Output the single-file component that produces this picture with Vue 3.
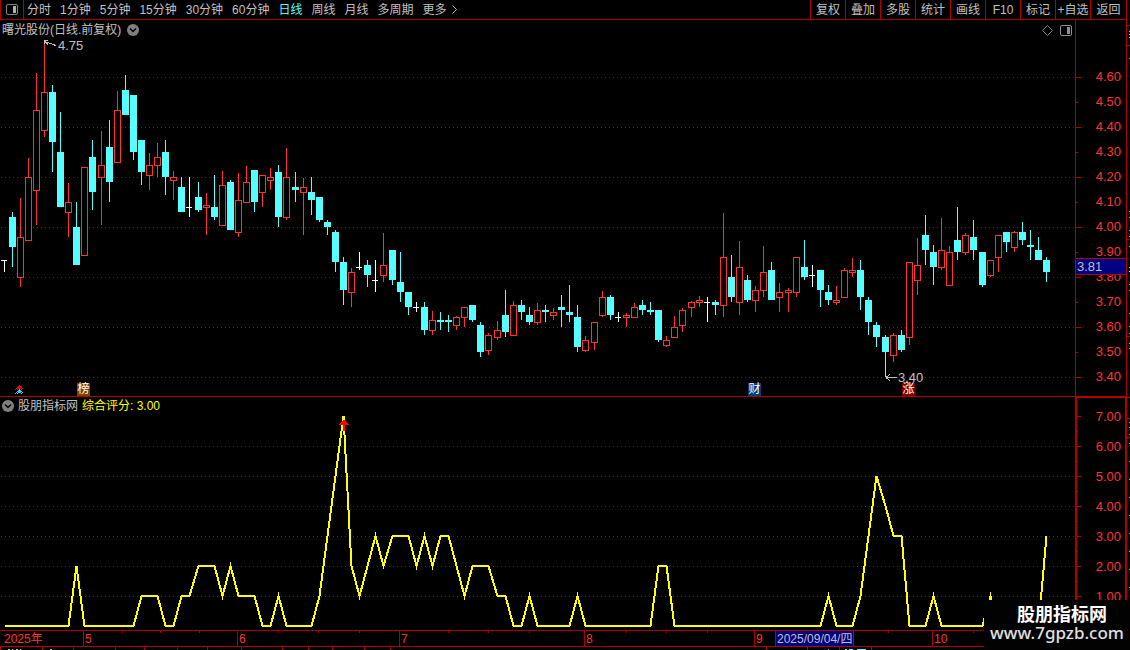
<script setup>
const periods = ['分时', '1分钟', '5分钟', '15分钟', '30分钟', '60分钟', '日线', '周线', '月线', '多周期']
const tools = ['复权', '叠加', '多股', '统计', '画线', 'F10', '标记', '+自选', '返回']
const priceLabels = Array.from({ length: 13 }, (_, i) => (4.6 - i * 0.1).toFixed(2))
const scoreLabels = Array.from({ length: 7 }, (_, i) => (7 - i).toFixed(2))
const months = [
  { name: '2025年', span: 83 },
  { name: '5', span: 154 },
  { name: '6', span: 162 },
  { name: '7', span: 185 },
  { name: '8', span: 170 },
  { name: '9', span: 178 },
  { name: '10', span: 194 }
]
const monthColumns = months.map((m) => m.span + 'fr').join(' ')
const weekTicks = [122, 160, 199, 278, 318, 359, 448, 488, 529, 626, 666, 707, 796, 836, 888, 973]
const footerCells = [0, 42, 73, 115, 144, 177, 207, 241, 282, 308, 332, 364, 390, 766, 807, 839, 871]
const edgeRules = [25, 45, 239, 336, 397, 418, 437]
const edgeMarks = [31, 34, 37, 58, 211, 217, 230, 236, 246, 267, 271, 284, 290, 313, 326, 333, 343, 348, 422, 427, 434, 443, 461, 479, 497, 515, 533, 551, 569, 587]

// kind (u up, d down, w doji), high, body top, body bottom, low
const series = `w 260 260 261 272;d 212 217 247 267;u 198 237 278 287;u 158 177 241 241;u 73 110 191 225;u 43 92 131 137;d 85 92 142 172;d 112 152 207 207;u 183 202 213 237;d 202 227 265 265
u 167 167 256 256;d 140 157 192 210;u 131 165 178 225;d 120 147 182 202;u 91 110 163 163;d 75 90 115 115;d 95 95 152 160;d 140 140 172 185;u 153 165 176 190;u 143 157 166 177
d 140 152 177 195;u 171 177 181 200;d 177 187 212 212;w 177 207 208 217;d 182 197 210 212;u 193 205 208 235;d 175 207 217 220;u 171 185 226 226;d 180 182 230 230;u 173 200 233 237
u 166 182 203 203;d 170 170 202 212;u 175 175 193 207;u 168 177 181 190;d 165 172 217 227;u 148 177 218 220;d 172 187 190 202;u 178 187 193 235;d 177 192 200 215;d 197 197 220 222
d 220 222 227 235;d 230 232 262 272;d 257 262 290 305;u 268 272 293 307;w 252 267 268 270;d 260 265 275 287;w 260 280 281 292;u 233 265 276 282;d 250 250 280 285;d 252 282 292 302
d 292 292 307 315;w 302 307 308 312;d 302 307 330 335;u 311 320 331 335;d 312 320 322 330;d 315 320 322 332;u 316 317 326 330;u 307 307 318 327;d 305 305 320 322;d 322 325 352 357
u 333 335 351 355;u 321 330 338 340;d 290 315 332 337;u 301 305 336 336;d 300 305 312 320;d 307 315 322 325;u 303 310 323 325;d 305 310 312 322;u 308 312 316 320;d 295 307 310 327
d 285 312 315 322;d 305 317 347 352;u 336 340 351 352;u 322 322 343 350;u 291 297 316 317;d 295 297 315 320;w 312 317 318 322;u 313 315 318 327;u 303 307 318 318;d 300 305 310 315
d 302 310 312 315;d 310 310 340 342;u 336 340 346 347;u 316 327 338 338;u 308 310 326 332;u 301 302 308 317;u 296 300 303 307;w 297 302 303 322;d 300 302 305 315;u 213 257 306 317
d 255 277 297 302;u 241 267 303 315;d 275 280 300 302;u 286 290 301 312;u 246 272 291 297;d 262 270 300 300;u 283 292 298 312;u 288 290 293 312;u 257 257 293 297;d 240 267 277 280
w 265 275 276 287;d 270 270 290 307;d 285 292 300 305;u 286 300 303 305;u 268 270 298 298;u 258 270 273 277;d 260 270 297 310;d 297 300 322 335;d 322 325 337 347;d 335 337 352 377
u 333 335 356 362;d 330 335 350 352;u 262 262 338 345;u 238 265 281 295;d 215 235 250 265;d 245 252 267 285;u 218 250 268 270;u 246 252 286 286;d 207 240 252 260;u 233 235 253 255
d 220 237 250 260;d 252 252 285 287;u 260 260 276 277;u 235 235 258 272;d 232 232 242 252;u 231 232 248 252;d 222 232 240 245;d 230 245 247 260;d 237 250 260 260;d 257 260 272 282`
const barX = (i) => Math.floor(4.045 + i * 8.0825)
const candles = series.split(/[;\n]/).map((row, i) => {
  const [kind, ...v] = row.trim().split(' ')
  const [high, top, bottom, low] = v.map(Number)
  return { kind, x: barX(i), high, top, bottom, low }
})

const knots = [
  [0, 0], [8, 0], [9, 2], [10, 0], [16, 0], [17, 1], [19, 1], [20, 0], [21, 0], [22, 1], [23, 1], [24, 2], [26, 2],
  [27, 1], [28, 2], [29, 1], [31, 1], [32, 0], [33, 0], [34, 1], [35, 0], [38, 0], [39, 1], [42, 7], [43, 2], [44, 1],
  [46, 3], [47, 2], [48, 3], [50, 3], [51, 2], [52, 3], [53, 2], [54, 3], [55, 3], [57, 1], [58, 2], [60, 2], [61, 1],
  [62, 1], [63, 0], [64, 0], [65, 1], [66, 0], [70, 0], [71, 1], [72, 0], [80, 0], [81, 2], [82, 2], [83, 0], [101, 0],
  [102, 1], [103, 0], [105, 0], [106, 1], [108, 5], [109, 4], [110, 3], [111, 3], [112, 0], [114, 0], [115, 1],
  [116, 0], [121, 0], [122, 1], [123, 0], [128, 0], [129, 3]
]
const scoreLine = knots.map(([i, v]) => `${barX(i) + 0.5},${229 - v * 30}`).join(' ')
const pct = (n, total) => (n / total) * 100 + '%'
</script>

<template>
  <div class="terminal">
    <main class="screen">
      <header class="toolbar">
        <button class="pane-toggle" aria-label="侧栏">
          <svg width="12" height="11" viewBox="0 0 12 11"><rect x=".5" y=".5" width="11" height="10" rx="1.5" fill="none" stroke="#808080" /><rect x="7" y="2" width="3" height="7" fill="#b0b0b0" /></svg>
        </button>
        <nav class="periods">
          <button v-for="p in periods" :key="p" :class="{ active: p === '日线' }">{{ p }}</button>
          <button class="more">更多<svg width="6" height="9" viewBox="0 0 6 9"><path d="M.5 .5L4.5 4.5L.5 8.5" fill="none" stroke="#c0c0c0" /></svg></button>
        </nav>
        <div class="tools"><button v-for="t in tools" :key="t">{{ t }}</button></div>
      </header>

      <section class="panel price">
        <div class="plot">
          <svg class="canvas" viewBox="0 20 1075 376" preserveAspectRatio="none" shape-rendering="crispEdges">
            <line v-for="n in 7" :key="n" x1="1" x2="1075" :y1="27.5 + n * 50" :y2="27.5 + n * 50" class="grid" />
            <g v-for="c in candles" :key="c.x" :class="c.kind">
              <template v-if="c.kind === 'u'">
                <rect :x="c.x" :y="c.high" width="1" :height="c.top - c.high" />
                <rect :x="c.x" :y="c.bottom" width="1" :height="c.low - c.bottom" />
                <rect class="hollow" :x="c.x - 2.5" :y="c.top + 0.5" width="6" :height="c.bottom - c.top - 1" />
              </template>
              <template v-else>
                <rect :x="c.x" :y="c.high" width="1" :height="c.low - c.high" />
                <rect :x="c.x - 3" :y="c.top" :width="c.kind === 'w' ? 6 : 7" :height="c.bottom - c.top" />
              </template>
            </g>
            <path d="M44.5 44V40.5H48M44.5 41.5L56 45.5M45 41.5L48 44.5" class="pointer" />
            <path d="M886 377.5H897M886 377.5L890 374.5M886 377.5L890 380.5" class="pointer" />
            <path d="M15.5 389.5L19.5 386L23.5 389.5M17 390L19.5 388L22 390" fill="none" stroke="#f00" />
            <path d="M15.5 393.5L19.5 390L23.5 393.5M17 394L19.5 392L22 394" fill="none" stroke="#3cf" />
          </svg>
          <div class="title">
            <span>曙光股份(日线.前复权)</span>
            <button class="round" aria-label="展开"><svg width="12" height="12" viewBox="0 0 12 12"><circle cx="6" cy="6" r="6" fill="#808080" /><path d="M3 4.5L6 7.5L9 4.5" fill="none" stroke="#000" stroke-width="1.5" /></svg></button>
            <span class="corner">
              <svg width="11" height="11" viewBox="0 0 11 11"><path d="M5.5 .5L10.5 5.5L5.5 10.5L.5 5.5Z" fill="none" stroke="#808080" /></svg>
              <svg width="12" height="11" viewBox="0 0 12 11"><rect x=".5" y=".5" width="11" height="10" rx="1.5" fill="none" stroke="#909090" /><rect x="7" y="2" width="3" height="7" fill="#909090" /></svg>
            </span>
          </div>
          <span class="note" :style="{ left: pct(58, 1075), top: pct(19, 376) }">4.75</span>
          <span class="note" :style="{ left: pct(898, 1075), top: pct(351, 376) }">3.40</span>
          <span class="badge rank" :style="{ left: pct(77, 1075) }">榜</span>
          <span class="badge report" :style="{ left: pct(748, 1075) }">财</span>
          <span class="badge rise" :style="{ left: pct(902, 1075) }">涨</span>
        </div>
        <div class="axis price-axis">
          <svg class="ticks" viewBox="0 20 5 376" preserveAspectRatio="none" shape-rendering="crispEdges">
            <rect v-for="n in 13" :key="n" x="0" :y="52 + n * 25" :width="n % 2 ? 5 : 2" height="1" fill="#b00000" />
          </svg>
          <span v-for="p in priceLabels" :key="p" class="label">{{ p }}</span>
          <strong class="last" :style="{ top: pct(238, 376) }">3.81</strong>
        </div>
      </section>

      <section class="panel score">
        <div class="plot">
          <svg class="canvas" viewBox="0 0 1075 233" preserveAspectRatio="none" shape-rendering="crispEdges">
            <line v-for="n in 6" :key="n" x1="1" x2="1075" :y1="19.5 + n * 30" :y2="19.5 + n * 30" class="grid" />
            <polyline :points="scoreLine" fill="none" stroke="#ff0" stroke-width="2" />
            <path d="M344 22L349 28H345V34H343V28H339Z" fill="#f00" />
          </svg>
          <div class="title">
            <button class="round" aria-label="展开"><svg width="12" height="12" viewBox="0 0 12 12"><circle cx="6" cy="6" r="6" fill="#808080" /><path d="M3 4.5L6 7.5L9 4.5" fill="none" stroke="#000" stroke-width="1.5" /></svg></button>
            <span>股朋指标网</span>
            <span class="value">综合评分: 3.00</span>
          </div>
        </div>
        <div class="axis score-axis">
          <svg class="ticks" viewBox="0 0 5 233" preserveAspectRatio="none" shape-rendering="crispEdges">
            <rect v-for="n in 13" :key="n" x="0" :y="4 + n * 15" :width="n % 2 ? 4 : 1" height="1" fill="#b00000" />
          </svg>
          <span v-for="s in scoreLabels" :key="s" class="label">{{ s }}</span>
        </div>
      </section>

      <div class="dates" :style="{ gridTemplateColumns: monthColumns }">
        <span v-for="m in months" :key="m.name" class="month">{{ m.name }}</span>
        <i v-for="t in weekTicks" :key="t" class="week" :style="{ left: pct(t, 1126) }"></i>
        <span class="cursor-date" :style="{ left: pct(775, 1126) }">2025/09/04/四</span>
      </div>
      <div class="footer">
        <svg class="canvas" viewBox="0 0 1126 3" preserveAspectRatio="none" shape-rendering="crispEdges">
          <rect v-for="f in footerCells" :key="f" :x="f" y="0" width="1" height="3" fill="#b00000" />
          <path d="M8 2h2v1h-2zM12 2h1v1h-1zM16 2h2v1h-2zM20 2h1v1h-1zM50 2h2v1h-2zM828 2h1v1h-1z" fill="#c0c0c0" />
          <path d="M845 2h2v1h-2zM849 2h4v1h-4zM857 2h9v1h-9z" fill="#5ff" />
        </svg>
      </div>
    </main>
    <aside class="edge">
      <svg class="canvas" viewBox="0 0 3 650" preserveAspectRatio="none" shape-rendering="crispEdges">
        <rect v-for="y in edgeRules" :key="y" x="0" :y="y" width="3" height="1" fill="#b00000" />
        <rect v-for="y in edgeMarks" :key="y" x="2" :y="y" width="1" height="1" fill="#c0c0c0" />
      </svg>
    </aside>
    <div class="watermark"><b>股朋指标网</b><span>www.7gpzb.com</span></div>
  </div>
</template>

<style>
body { background: #000; }
</style>

<style scoped>
.terminal { position: relative; display: grid; grid-template-columns: minmax(0, 1fr) 4px; min-height: 100vh; background: #000; color: #c0c0c0; font: 12px/16px "Liberation Sans", "Noto Sans CJK SC", sans-serif; overflow: hidden; }
.screen { display: flex; flex-direction: column; min-width: 0; }
button { padding: 0; border: 0; background: none; color: inherit; font: inherit; white-space: nowrap; }
.toolbar { display: flex; height: 19px; border-bottom: 1px solid #b00000; }
.pane-toggle { display: flex; align-items: center; justify-content: center; width: 24px; box-sizing: border-box; border: solid #b00000; border-width: 0 1px; }
.periods { display: flex; gap: 9px; margin-left: 3px; align-items: center; }
.active { color: #5ff; }
.more { display: flex; align-items: center; gap: 5px; }
.tools { display: flex; margin-left: auto; }
.tools button { width: 35px; box-sizing: border-box; border-left: 1px solid #b00000; }
.tools button:last-child { width: 36px; }
.panel { display: grid; grid-template-columns: minmax(0, 1fr) 51px; grid-template-rows: minmax(0, 1fr); min-height: 0; }
.price { flex: 376 1 0; border-bottom: 1px solid #b00000; }
.score { flex: 233 1 0; }
.plot { position: relative; min-height: 0; }
.canvas { position: absolute; inset: 0; width: 100%; height: 100%; }
.grid { stroke: #901010; stroke-dasharray: 1 3; }
.score .grid { stroke: #a00808; }
.u { fill: #ff3232; }
.hollow { fill: #000; stroke: #ff3232; }
.d { fill: #5ff; }
.w { fill: #fff; }
.pointer { fill: none; stroke: #c0c0c0; }
.title { position: relative; display: flex; align-items: center; gap: 6px; padding: 2px 3px 0 2px; }
.score .title { gap: 4px; padding-top: 1px; }
.round { display: flex; }
.corner { display: flex; gap: 7px; margin-left: auto; }
.value { color: #ff0; }
.note { position: absolute; line-height: 14px; font-size: 13px; }
.badge { position: absolute; bottom: 0; width: 13px; height: 13px; line-height: 13px; text-align: center; color: #fff; }
.rank { background: #804000; }
.report { background: #003c78; }
.rise { background: #800000; }
.axis { position: relative; display: grid; box-sizing: border-box; border-left: 1px solid #b00000; color: #ff3232; font-size: 13px; }
.axis::before { content: ""; }
.price-axis { grid-template-rows: minmax(0, 44fr) repeat(13, minmax(0, 25fr)) minmax(0, 7fr); }
.score-axis { grid-template-rows: minmax(0, 4fr) repeat(7, minmax(0, 30fr)) minmax(0, 19fr); border: solid #b00000; border-width: 0 1px 0 2px; box-shadow: inset 0 1px #b00000; }
.label { display: flex; align-items: center; justify-content: flex-end; padding-right: 5px; line-height: 15px; }
.score-axis .label { padding-right: 4px; }
.ticks { position: absolute; left: 0; top: 0; width: 5px; height: 100%; }
.last { position: absolute; left: 0; right: 0; height: 15px; line-height: 15px; border: solid #b00000; border-width: 1px 0; background: #000080; color: #c0c0c0; font-weight: 400; padding-left: 1px; }
.dates { position: relative; display: grid; height: 15px; border-top: 1px solid #b00000; color: #ff3232; line-height: 16px; }
.month { border-left: 1px solid #b00000; padding-left: 1px; }
.month:first-child { border-left: 0; padding-left: 4px; }
.week { position: absolute; top: 0; width: 1px; height: 2px; background: #b00000; }
.cursor-date { position: absolute; top: 0; bottom: 0; padding: 0 1px; border: solid #b00000; border-width: 0 1px; background: #000080; color: #c0c0c0; white-space: nowrap; }
.footer { position: relative; height: 3px; border-top: 1px solid #b00000; }
.edge { position: relative; border-left: 1px solid #b00000; }
.watermark { position: absolute; right: 0; bottom: 0; display: flex; flex-direction: column; align-items: center; width: 146px; height: 46px; padding-top: 4px; background: #020202; color: #fff; font-family: "Noto Sans", "Noto Sans CJK SC", sans-serif; }
.watermark b { font-size: 18px; line-height: 20px; padding-left: 10px; }
.watermark span { font-size: 17px; line-height: 18px; font-weight: 500; color: #e0e0e0; }
</style>
